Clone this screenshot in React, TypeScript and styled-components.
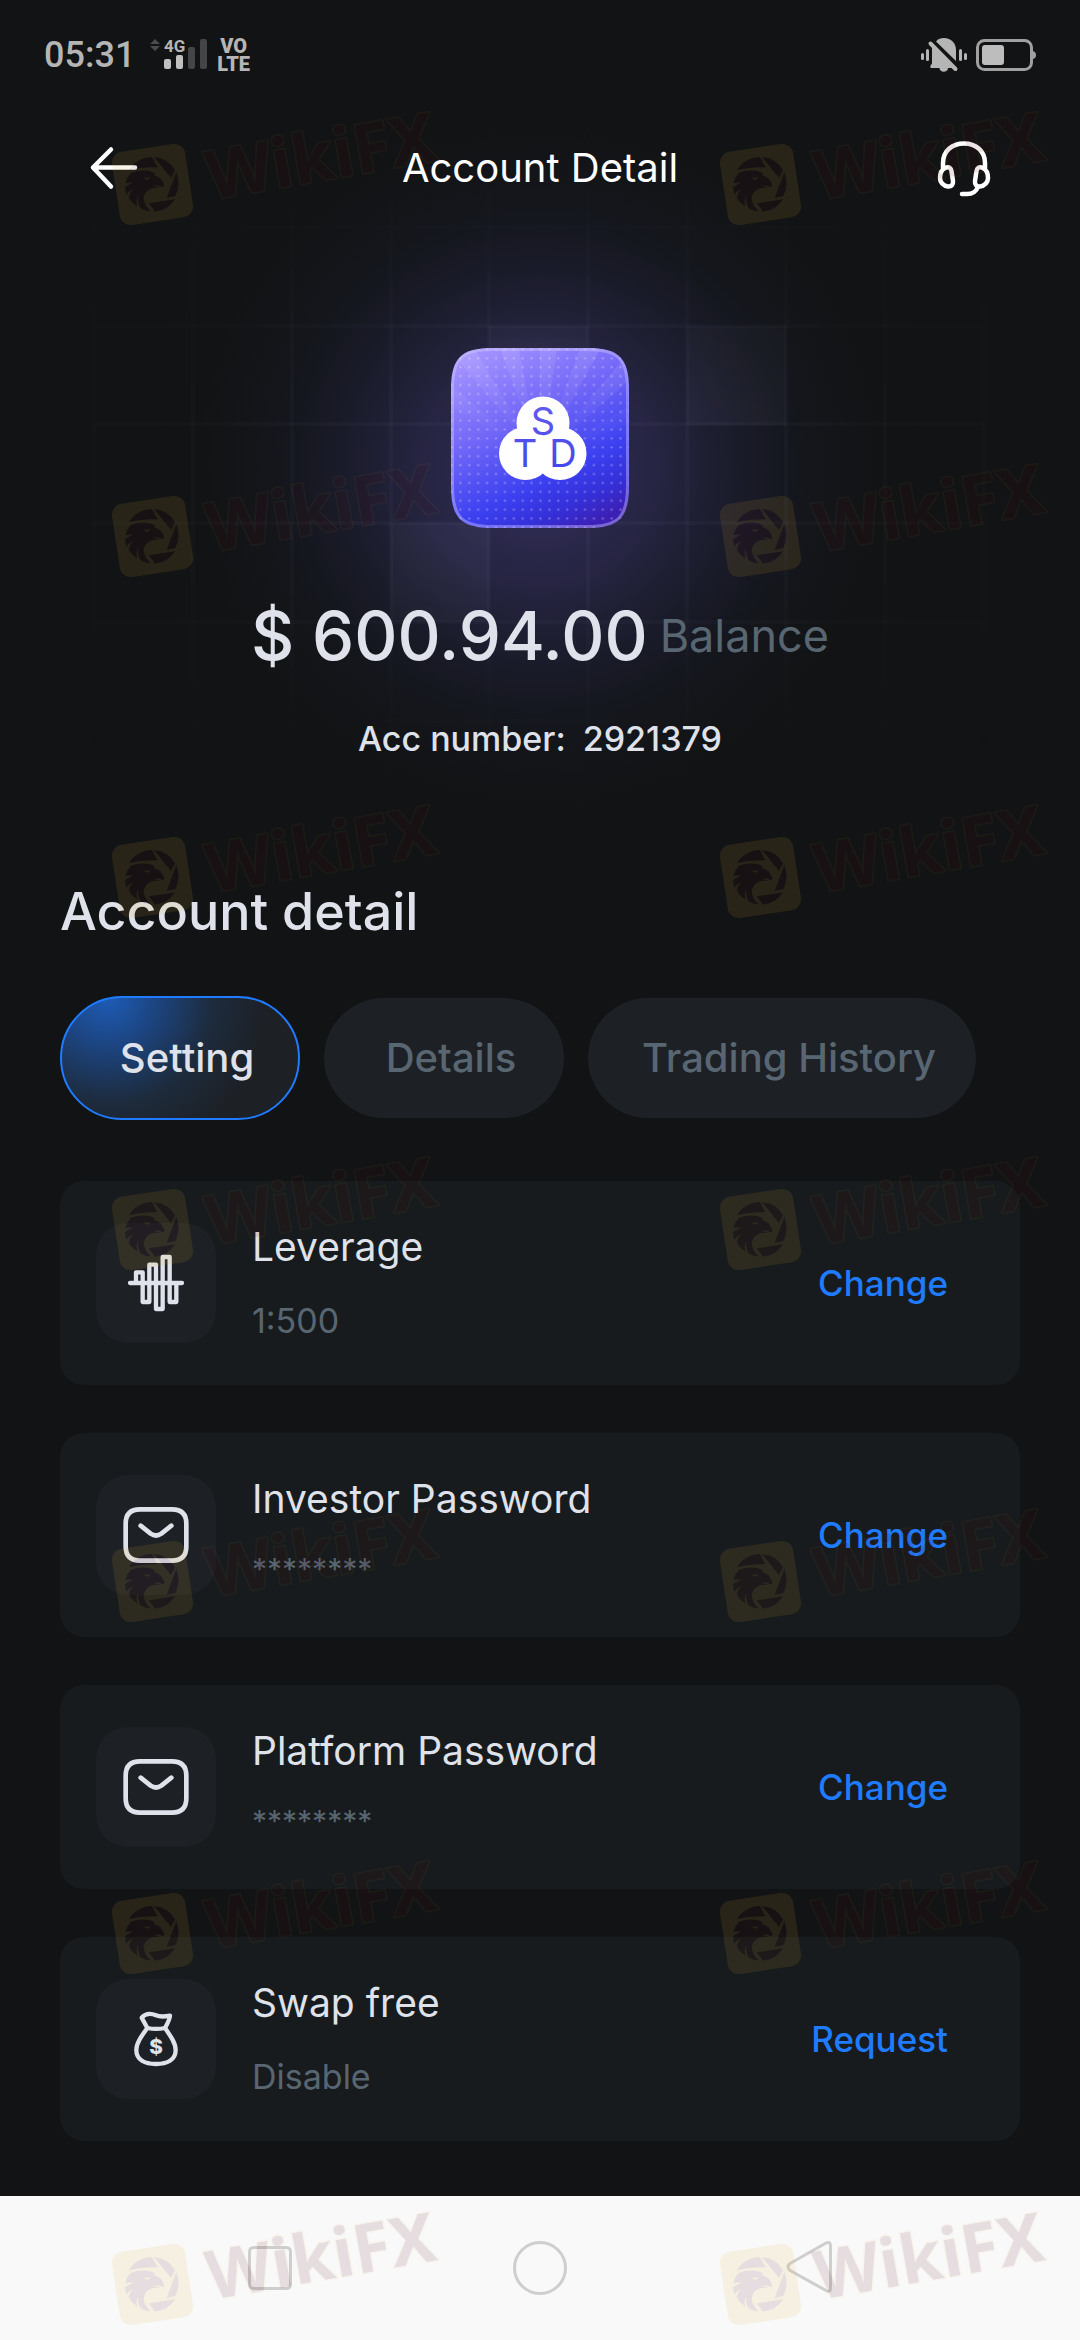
import React, { useState } from "react";
import styled, { createGlobalStyle } from "styled-components";

const color = {
  page: "#111314",
  card: "#171b1d",
  raised: "#1d2025",
  text: "#dfe2ea",
  muted: "#586672",
  accent: "#1f7bff",
  status: "#b5b5b5",
};

const GlobalStyle = createGlobalStyle`
  *, *::before, *::after { box-sizing: border-box; }
  body {
    margin: 0;
    background: ${color.page};
    color: ${color.text};
    font-family: Inter, "Liberation Sans", sans-serif;
    font-kerning: normal;
  }
  button {
    margin: 0;
    padding: 0;
    border: 0;
    background: none;
    color: inherit;
    font: inherit;
    cursor: pointer;
  }
  h1, h2, h3, p, ul { margin: 0; padding: 0; }
  svg { display: block; overflow: visible; }
`;

const Screen = styled.div`
  position: relative;
  display: flex;
  flex-direction: column;
  min-height: 100vh;
  overflow: hidden;
  background: ${color.page};
`;

/* ---------- status bar ---------- */

const StatusBar = styled.div`
  position: relative;
  z-index: 1;
  display: flex;
  align-items: center;
  justify-content: space-between;
  height: 109px;
  padding: 0 44px;
  color: ${color.status};
  font-family: Roboto, sans-serif;
`;

const StatusGroup = styled.div<{ $gap: number }>`
  display: flex;
  align-items: center;
  gap: ${(p) => p.$gap}px;
`;

const Clock = styled.span`
  margin-right: 6px;
  font-size: 36px;
  font-weight: 500;
  line-height: 40px;
`;

const VoLte = styled.span`
  font-size: 20px;
  font-weight: 900;
  line-height: 18px;
  text-align: center;
`;

const SignalIcon = () => (
  <svg width="58" height="32" viewBox="0 0 58 32" aria-hidden="true">
    <path d="M5 0 L10 5 H0 Z M0 7 H10 L5 12 Z" fill="#4a4b4c" />
    <text x="14" y="13" fontFamily="Roboto, sans-serif" fontSize="17" fontWeight="700" fill="#b5b5b5">
      4G
    </text>
    <rect x="14" y="20" width="7" height="10" rx="2" fill="#c0c0c0" />
    <rect x="26" y="16" width="7" height="14" rx="2" fill="#c0c0c0" />
    <rect x="38" y="8" width="7" height="22" rx="2" fill="#444546" />
    <rect x="50" y="0" width="7" height="30" rx="2" fill="#444546" />
  </svg>
);

const MutedBellIcon = () => (
  <svg width="46" height="34" viewBox="0 0 46 34" aria-hidden="true">
    <g fill="#b5b5b5">
      <rect x="0" y="15" width="3" height="7" rx="1.5" />
      <rect x="5" y="11" width="3" height="12" rx="1.5" />
      <rect x="38" y="11" width="3" height="12" rx="1.5" />
      <rect x="43" y="15" width="3" height="7" rx="1.5" />
      <path d="M15 3.4 C17 1 20 0 23 0 C30 0 35 5 35 12 V23 Z" />
      <path d="M11 8.5 L36 31.5 L35 33 L31 30 H27 C27 35 18.500 35 18.500 30 H9.500 V27.500 L11 25.500 Z" />
    </g>
    <path d="M9.500 5.500 L34.500 31" stroke="#b5b5b5" strokeWidth="4" strokeLinecap="round" />
  </svg>
);

const BatteryIcon = () => (
  <svg width="60" height="32" viewBox="0 0 60 32" aria-hidden="true">
    <rect x="1.500" y="1.500" width="54" height="29" rx="7" fill="none" stroke="#a0a0a0" strokeWidth="3" />
    <rect x="6" y="6" width="22" height="20" rx="3" fill="#bdbdbd" />
    <path d="M57 12 Q60 13 60 16 Q60 19 57 20 Z" fill="#a0a0a0" />
  </svg>
);

/* ---------- header ---------- */

const Header = styled.header`
  position: relative;
  z-index: 1;
  display: grid;
  grid-template-columns: 52px 1fr 52px;
  align-items: center;
  height: 118px;
  padding: 0 90px;
`;

const IconButton = styled.button`
  display: flex;
  align-items: center;
  height: 60px;
`;

const Title = styled.h1`
  color: #fff;
  font-size: 40px;
  font-weight: 400;
  line-height: 48px;
  text-align: center;
`;

const BackIcon = () => (
  <svg width="48" height="42" viewBox="0 0 48 42" fill="none" stroke="#fff" strokeWidth="4.500" strokeLinecap="round" strokeLinejoin="round" aria-hidden="true">
    <path d="M21 2.500 L3 20.500 L21 39.500 M3 20.500 H45" />
  </svg>
);

const HeadsetIcon = () => (
  <svg width="52" height="55" viewBox="0 0 52 55" fill="none" stroke="#fff" strokeWidth="4.500" strokeLinecap="round" strokeLinejoin="round" aria-hidden="true">
    <path d="M5 27 V22 C5 10 14 2.500 26 2.500 C38 2.500 47 10 47 22 V27" />
    <path d="M7 27 C11 25 13 27 13.500 30 L15 40 C15.500 44 13 46 10 45.500 C5 45 2 41 2 37 C2 32 4 28.500 7 27 Z" />
    <path d="M45 27 C41 25 39 27 38.500 30 L37 40 C36.500 44 39 46 42 45.500 C47 45 50 41 50 37 C50 32 48 28.500 45 27 Z" />
    <path d="M40 46 C38 51 34 53 29 53 H24" />
  </svg>
);

/* ---------- hero ---------- */

const Backdrop = styled.svg`
  position: absolute;
  top: 107px;
  left: 50%;
  margin-left: -540px;
`;

const columns = [94, 193, 292, 391, 489, 588, 687, 786, 885, 984];
const rows = [120, 219, 317, 416, 515, 614];

const HeroBackdrop = () => (
  <Backdrop width="1080" height="720" viewBox="0 0 1080 720" aria-hidden="true">
    <defs>
      <radialGradient id="glow" gradientUnits="userSpaceOnUse" cx="540" cy="360" r="350">
        <stop offset="0" stopColor="#6a5bd0" stopOpacity="0.4" />
        <stop offset="0.35" stopColor="#5a50b4" stopOpacity="0.28" />
        <stop offset="0.7" stopColor="#3c3c82" stopOpacity="0.1" />
        <stop offset="1" stopColor="#2a3050" stopOpacity="0" />
      </radialGradient>
      <radialGradient id="gridFade" gradientUnits="userSpaceOnUse" cx="540" cy="350" r="480">
        <stop offset="0" stopColor="#fff" />
        <stop offset="0.5" stopColor="#fff" stopOpacity="0.7" />
        <stop offset="1" stopColor="#fff" stopOpacity="0.25" />
      </radialGradient>
      <linearGradient id="gridEnds" x1="0" y1="0" x2="0" y2="1">
        <stop offset="0" stopColor="#000" />
        <stop offset="0.32" stopColor="#000" stopOpacity="0.2" />
        <stop offset="0.45" stopColor="#000" stopOpacity="0" />
        <stop offset="0.65" stopColor="#000" stopOpacity="0" />
        <stop offset="0.95" stopColor="#000" />
      </linearGradient>
      <mask id="gridMask">
        <rect width="1080" height="720" fill="url(#gridFade)" />
        <rect width="1080" height="720" fill="url(#gridEnds)" />
      </mask>
    </defs>
    <rect width="1080" height="720" fill="url(#glow)" />
    <g mask="url(#gridMask)">
      <g stroke="#c8d0ff" strokeOpacity="0.04" strokeWidth="4">
        {columns.map((x) => (
          <line key={x} x1={x} x2={x} y1="0" y2="700" />
        ))}
        {rows.map((y) => (
          <line key={y} x1="94" x2="984" y1={y} y2={y} />
        ))}
      </g>
      <g fill="#e0dcff" fillOpacity="0.05">
        <rect x="489" y="219" width="99" height="99" />
        <rect x="687" y="219" width="99" height="99" />
        <rect x="391" y="416" width="98" height="99" />
      </g>
    </g>
  </Backdrop>
);

const rays = Array.from({ length: 18 }, (_, i) => {
  const at = (deg: number) => {
    const a = (deg * Math.PI) / 180;
    return `${(89 + 200 * Math.sin(a)).toFixed(1)} ${(110 - 200 * Math.cos(a)).toFixed(1)}`;
  };
  return `M89 110 L${at(i * 20)} L${at(i * 20 + 9)} Z`;
}).join(" ");

const BrandTile = () => (
  <svg width="178" height="180" viewBox="0 0 178 180" role="img" aria-label="STD">
    <defs>
      <linearGradient id="tile" x1="0.25" y1="0" x2="0.75" y2="1">
        <stop offset="0" stopColor="#a191ff" />
        <stop offset="0.35" stopColor="#7468f8" />
        <stop offset="0.7" stopColor="#3b40f0" />
        <stop offset="0.87" stopColor="#352fd8" />
        <stop offset="1" stopColor="#3c20b6" />
      </linearGradient>
      <linearGradient id="rayFade" x1="0" y1="0" x2="0" y2="1">
        <stop offset="0" stopColor="#fff" stopOpacity="0.1" />
        <stop offset="0.55" stopColor="#fff" stopOpacity="0" />
      </linearGradient>
      <linearGradient id="letters" gradientUnits="userSpaceOnUse" x1="0" y1="58" x2="0" y2="120">
        <stop offset="0" stopColor="#6359ee" />
        <stop offset="1" stopColor="#4248ea" />
      </linearGradient>
      <pattern id="dots" x="5" y="6" width="8.900" height="8.900" patternUnits="userSpaceOnUse">
        <circle cx="4.400" cy="4.400" r="1.100" fill="#fff" fillOpacity="0.34" />
      </pattern>
      <clipPath id="tileClip">
        <path d="M0 42 C0 10 10 0 42 0 H136 C168 0 178 10 178 42 V138 C178 170 168 180 136 180 H42 C10 180 0 170 0 138 Z" />
      </clipPath>
      <mask id="rayMask">
        <rect width="178" height="180" fill="url(#rayFade)" />
      </mask>
    </defs>
    <g clipPath="url(#tileClip)">
      <rect width="178" height="180" fill="url(#tile)" />
      <path d={rays} fill="#fff" mask="url(#rayMask)" />
      <rect width="178" height="180" fill="url(#dots)" />
      <path
        d="M0 42 C0 10 10 0 42 0 H136 C168 0 178 10 178 42 V138 C178 170 168 180 136 180 H42 C10 180 0 170 0 138 Z"
        fill="none"
        stroke="#d5caff"
        strokeOpacity="0.4"
        strokeWidth="6"
      />
    </g>
    <g fill="#fff">
      <circle cx="92" cy="75" r="26.500" />
      <circle cx="74.500" cy="105.500" r="26.500" />
      <circle cx="109" cy="105.500" r="26.500" />
    </g>
    <g fill="url(#letters)" fontFamily="Inter, sans-serif" fontSize="38" textAnchor="middle">
      <text x="92" y="87">S</text>
      <text x="74" y="119">T</text>
      <text x="112" y="119">D</text>
    </g>
  </svg>
);

const Hero = styled.section`
  position: relative;
  display: flex;
  flex-direction: column;
  align-items: center;
  padding-top: 121px;
`;

const Balance = styled.p`
  display: flex;
  align-items: center;
  gap: 12px;
  margin-top: 66px;
  line-height: 84px;
`;

const Amount = styled.strong`
  font-size: 67px;
  font-weight: 500;
`;

const BalanceLabel = styled.span`
  color: ${color.muted};
  font-size: 45px;
`;

const AccountNumber = styled.p`
  display: flex;
  gap: 17px;
  margin-top: 41px;
  font-size: 34px;
  font-weight: 500;
  line-height: 40px;
`;

/* ---------- account detail ---------- */

const Main = styled.main`
  position: relative;
  flex: 1;
  padding: 123px 60px 55px;
`;

const Heading = styled.h2`
  font-size: 52px;
  font-weight: 500;
  line-height: 60px;
`;

const Tabs = styled.div`
  display: flex;
  align-items: center;
  gap: 24px;
  height: 124px;
  margin-top: 54px;
`;

const Tab = styled.button<{ $active: boolean }>`
  min-width: 240px;
  height: ${(p) => (p.$active ? 124 : 120)}px;
  padding: 0 40px 0 54px;
  border: ${(p) => (p.$active ? `2px solid ${color.accent}` : "0")};
  border-radius: 62px;
  background: ${(p) =>
    p.$active
      ? "radial-gradient(circle at 46px 0, #1d5cb6 0, #1c4684 45px, #1d2b3d 105px, #1d2025 160px)"
      : color.raised};
  color: ${(p) => (p.$active ? color.text : color.muted)};
  font-size: 40px;
  font-weight: 500;
  line-height: 48px;
  white-space: nowrap;
`;

const CardList = styled.ul`
  display: flex;
  flex-direction: column;
  gap: 48px;
  margin-top: 61px;
  list-style: none;
`;

const Card = styled.li`
  display: flex;
  align-items: center;
  gap: 36px;
  padding: 42px 72px 42px 36px;
  border-radius: 24px;
  background: ${color.card};
`;

const IconBox = styled.div`
  display: flex;
  align-items: center;
  justify-content: center;
  width: 120px;
  height: 120px;
  border-radius: 32px;
  background: ${color.raised};
`;

const CardText = styled.div`
  display: flex;
  flex: 1;
  flex-direction: column;
  align-self: flex-start;
  gap: 28px;
`;

const CardTitle = styled.h3`
  font-size: 39px;
  font-weight: 400;
  line-height: 48px;
`;

const CardValue = styled.p<{ $masked: boolean }>`
  color: ${color.muted};
  font-size: ${(p) => (p.$masked ? 30 : 34)}px;
  line-height: ${(p) => (p.$masked ? 36 : 44)}px;
`;

const CardAction = styled.button`
  color: ${color.accent};
  font-size: 35px;
  font-weight: 500;
  line-height: 44px;
`;

const LeverageIcon = () => (
  <svg width="56" height="56" viewBox="264 285 168 168" fill="none" stroke="#dfe2ea" strokeWidth="13" strokeLinecap="round" strokeLinejoin="round" aria-hidden="true">
    <path d="M270 369 H426 M288 369 V337 H308 V426 H328 V314 H348 V447 H368 V291 H389 V426 H409 V369" />
  </svg>
);

const MailIcon = () => (
  <svg width="66" height="56" viewBox="249 1041 198 168" fill="none" stroke="#dfe2ea" strokeWidth="14" strokeLinecap="round" strokeLinejoin="round" aria-hidden="true">
    <path d="M300 1048 H396 Q439 1048 439 1091 V1159 Q439 1202 396 1202 H300 Q257 1202 257 1159 V1091 Q257 1048 300 1048 Z" />
    <path d="M302 1097 L332 1121 Q348 1132 364 1121 L394 1097" />
  </svg>
);

const BagIcon = () => (
  <svg width="44" height="54" viewBox="282 1056 132 162" fill="none" stroke="#dfe2ea" strokeWidth="13" strokeLinecap="round" strokeLinejoin="round" aria-hidden="true">
    <path d="M322 1104 L305 1073 C318 1058 334 1060 348 1066 C362 1072 375 1070 390 1067 C389 1080 382 1092 375 1104 C356 1108 341 1108 322 1104 Z" />
    <path d="M322 1104 C303 1130 289 1150 289 1170 C289 1200 315 1212 348 1212 C381 1212 407 1200 407 1170 C407 1150 393 1130 375 1104" />
    <text x="348" y="1181" fontFamily="Inter, sans-serif" fontSize="62" fontWeight="800" textAnchor="middle" fill="#dfe2ea" stroke="none">
      $
    </text>
  </svg>
);

/* ---------- system navigation ---------- */

const NavBar = styled.nav`
  display: flex;
  align-items: center;
  justify-content: space-around;
  height: 144px;
  padding: 0 135px;
  background: #f9f9f9;
`;

const NavButton = styled.button`
  display: flex;
  align-items: center;
  justify-content: center;
  width: 60px;
  height: 60px;
`;

const NavGlyph = ({ d }: { d: string }) => (
  <svg width="60" height="60" viewBox="0 0 60 60" fill="none" stroke="#cecece" strokeWidth="3" strokeLinejoin="round" aria-hidden="true">
    <path d={d} />
  </svg>
);

const navItems = [
  { label: "Recent apps", d: "M14 9.500 H46 Q50.500 9.500 50.500 14 V46 Q50.500 50.500 46 50.500 H14 Q9.500 50.500 9.500 46 V14 Q9.500 9.500 14 9.500 Z" },
  { label: "Home", d: "M30 4.500 A25.500 25.500 0 1 1 30 55.500 A25.500 25.500 0 1 1 30 4.500 Z" },
  { label: "Back", d: "M46 5 Q50.500 3 50.500 8 V50 Q50.500 55 46 52.500 L10 32.500 Q6 29 10 25.500 Z" },
];

/* ---------- watermark ---------- */

const WatermarkLayer = styled.div`
  position: absolute;
  inset: 0;
  z-index: 2;
  overflow: hidden;
  pointer-events: none;
`;

const Mark = styled.svg`
  position: absolute;
  opacity: 0.11;
`;

const markTops = [90, 442, 783, 1135, 1487, 1839, 2190];
const markLefts = [100, 708];

const WatermarkMark = ({ x, y }: { x: number; y: number }) => (
  <Mark width="360" height="150" viewBox="0 0 360 150" style={{ left: x, top: y }}>
    <rect x="15.500" y="57.500" width="74" height="74" rx="11" fill="#e1af2f" transform="rotate(-8.600 52.500 94.500)" />
    <g transform="scale(0.3333)">
      <g fill="#500a14">
        <path d="M87 241 Q108 203 156 201 L173 232 Q126 231 87 241 Z" />
        <path d="M162 201 Q206 205 225 241 L213 264 Z" />
        <path d="M229 246 Q244 284 226 318 L200 324 Z" />
        <path d="M147 340 L225 328 Q204 362 165 365 Z" />
        <path d="M92 249 Q124 236 158 246 Q167 251 163 256 Q186 262 192 284 Q193 291 190 292 Q174 284 160 288 Q172 289 180 294 Q166 292 156 295 Q132 304 131 326 Q134 348 152 364 Q136 364 122 355 Q112 340 115 318 Q107 334 112 350 Q94 338 86 322 Q90 306 100 296 Q86 304 80 314 Q76 304 75 292 Q88 282 100 278 Q86 276 76 280 Q80 262 92 249 Z" />
      </g>
      <path d="M130 262 Q140 264 151 262 Q147 271 139 269 Z" fill="#e1af2f" />
    </g>
    <text
      x="111"
      y="110"
      transform="rotate(-10 111 110)"
      fontFamily="Noto Sans, sans-serif"
      fontSize="68"
      fontWeight="700"
      fill="#500a14"
      stroke="#e1af2f"
      strokeOpacity="0.45"
      strokeWidth="3"
      strokeLinejoin="round"
      paintOrder="stroke"
    >
      WikiFX
    </text>
  </Mark>
);

/* ---------- screen ---------- */

const tabs = ["Setting", "Details", "Trading History"];

const settings = [
  { title: "Leverage", value: "1:500", masked: false, action: "Change", Icon: LeverageIcon },
  { title: "Investor Password", value: "********", masked: true, action: "Change", Icon: MailIcon },
  { title: "Platform Password", value: "********", masked: true, action: "Change", Icon: MailIcon },
  { title: "Swap free", value: "Disable", masked: false, action: "Request", Icon: BagIcon },
];

export default function App() {
  const [active, setActive] = useState(tabs[0]);

  return (
    <Screen>
      <GlobalStyle />
      <HeroBackdrop />
      <StatusBar>
        <StatusGroup $gap={9}>
          <Clock>05:31</Clock>
          <SignalIcon />
          <VoLte>
            VO
            <br />
            LTE
          </VoLte>
        </StatusGroup>
        <StatusGroup $gap={9}>
          <MutedBellIcon />
          <BatteryIcon />
        </StatusGroup>
      </StatusBar>

      <Header>
        <IconButton aria-label="Go back">
          <BackIcon />
        </IconButton>
        <Title>Account Detail</Title>
        <IconButton aria-label="Support">
          <HeadsetIcon />
        </IconButton>
      </Header>

      <Hero>
        <BrandTile />
        <Balance>
          <Amount>$ 600.94.00</Amount>
          <BalanceLabel>Balance</BalanceLabel>
        </Balance>
        <AccountNumber>
          <span>Acc number:</span>
          <span>2921379</span>
        </AccountNumber>
      </Hero>

      <Main>
        <Heading>Account detail</Heading>
        <Tabs role="tablist">
          {tabs.map((tab) => (
            <Tab
              key={tab}
              role="tab"
              aria-selected={tab === active}
              $active={tab === active}
              onClick={() => setActive(tab)}
            >
              {tab}
            </Tab>
          ))}
        </Tabs>
        <CardList>
          {settings.map(({ title, value, masked, action, Icon }) => (
            <Card key={title}>
              <IconBox>
                <Icon />
              </IconBox>
              <CardText>
                <CardTitle>{title}</CardTitle>
                <CardValue $masked={masked}>{value}</CardValue>
              </CardText>
              <CardAction>{action}</CardAction>
            </Card>
          ))}
        </CardList>
      </Main>

      <NavBar>
        {navItems.map(({ label, d }) => (
          <NavButton key={label} aria-label={label}>
            <NavGlyph d={d} />
          </NavButton>
        ))}
      </NavBar>

      <WatermarkLayer aria-hidden="true">
        {markTops.map((y) => markLefts.map((x) => <WatermarkMark key={`${x}-${y}`} x={x} y={y} />))}
      </WatermarkLayer>
    </Screen>
  );
}
